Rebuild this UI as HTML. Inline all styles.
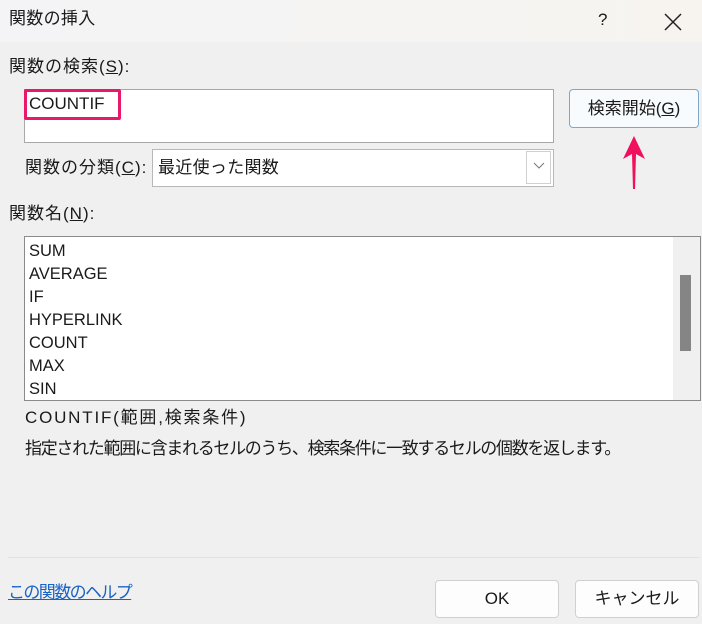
<!DOCTYPE html>
<html><head><meta charset="utf-8"><style>
*{margin:0;padding:0;box-sizing:border-box}
body{width:702px;height:624px;background:#f0f0f0;position:relative;overflow:hidden;font-family:"Liberation Sans","Noto Sans CJK JP",sans-serif;color:#1a1a1a;font-size:17px}
.a{position:absolute;white-space:nowrap;line-height:1}
.t{letter-spacing:1px}
.box{position:absolute;background:#fff;border:1px solid #9a9a9a}
.btn{position:absolute;background:#fdfdfd;border:1px solid #d0d0d0;border-radius:4px;text-align:center;font-size:17px}
</style></head><body>
<div style="position:absolute;left:0;top:0;width:702px;height:42px;background:linear-gradient(90deg,#f4f4f6,#f7f4f0)"></div>
<div class="a" style="left:9px;top:10px;font-size:17px;letter-spacing:0.3px">関数の挿入</div>
<div class="a" style="left:598px;top:11px;font-size:17px">?</div>
<svg class="a" style="left:663px;top:12px" width="20" height="20"><path d="M2 2L18 18M18 2L2 18" stroke="#222" stroke-width="1.5"/></svg>
<div class="a t" style="left:9px;top:58px">関数の検索(<u>S</u>):</div>
<div class="box" style="left:24px;top:89px;width:530px;height:54px;border-color:#a8a8a8"></div>
<div class="a" style="left:24px;top:89px;width:97px;height:31px;border:3px solid #e8186a;border-radius:2px;background:#fff"></div>
<div class="a" style="left:29px;top:95px;font-size:17px">COUNTIF</div>
<div class="btn" style="left:569px;top:89px;width:130px;height:39px;border-color:#7fa7c9;background:#f8fbfd;line-height:37px">検索開始(<u>G</u>)</div>
<svg class="a" style="left:620px;top:134px" width="28" height="58"><path d="M14 2L25 25L16 20L15 55L13 55L12 20L3 25Z" fill="#f0105e"/></svg>
<div class="a t" style="left:25px;top:159px">関数の分類(<u>C</u>):</div>
<div class="box" style="left:152px;top:149px;width:402px;height:38px;border-color:#b8b8b8"></div>
<div class="a" style="left:158px;top:159px;letter-spacing:0.3px">最近使った関数</div>
<div class="a" style="left:526px;top:151px;width:25px;height:33px;border:1px solid #d0d0d0;background:#fff"></div>
<svg class="a" style="left:533px;top:162px" width="12" height="8"><path d="M1 1L6 6L11 1" stroke="#777" fill="none"/></svg>
<div class="a t" style="left:9px;top:205px">関数名(<u>N</u>):</div>
<div class="box" style="left:24px;top:236px;width:677px;height:165px;border-color:#8a8a8a"></div>
<div class="a" style="left:673px;top:237px;width:27px;height:163px;background:#f0f0f0"></div>
<div class="a" style="left:680px;top:275px;width:11px;height:76px;background:#858585"></div>
<div class="a" style="left:29px;top:240px;line-height:23px;white-space:pre;font-size:16.5px">SUM
AVERAGE
IF
HYPERLINK
COUNT
MAX
SIN</div>
<div class="a" style="left:25px;top:409px;letter-spacing:1.8px">COUNTIF(範囲,検索条件)</div>
<div class="a" style="left:25px;top:440px;letter-spacing:-1.3px">指定された範囲に含まれるセルのうち、検索条件に一致するセルの個数を返します。</div>
<div class="a" style="left:8px;top:557px;width:692px;height:1px;background:#e2e2e2"></div>
<div class="a" style="left:8px;top:584px;color:#1a63c6;text-decoration:underline;letter-spacing:-1.6px">この関数のヘルプ</div>
<div class="btn" style="left:435px;top:580px;width:124px;height:38px;line-height:36px">OK</div>
<div class="btn" style="left:575px;top:580px;width:124px;height:38px;line-height:36px">キャンセル</div>
</body></html>
